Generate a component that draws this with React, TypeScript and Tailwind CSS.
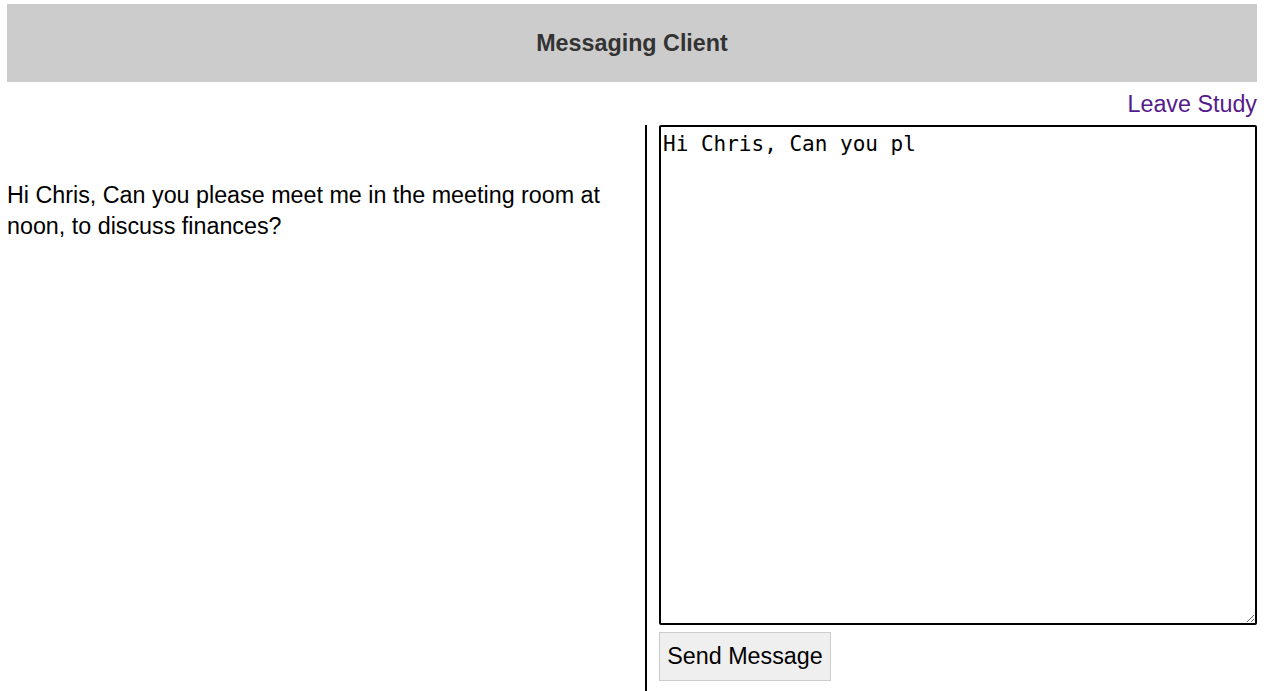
import React, { useEffect, useRef } from "react";

export default function App() {
  const ref = useRef<HTMLTextAreaElement>(null);
  useEffect(() => {
    const el = ref.current;
    if (el) {
      el.focus();
      el.setSelectionRange(el.value.length, el.value.length);
    }
  }, []);
  return (
    <div className="min-h-[691px] bg-white pt-1 pl-[7px] pr-3 font-['Liberation_Sans',Arial,sans-serif] text-black">
      <div className="flex h-[78px] w-[1250px] items-center justify-center bg-[#cccccc]">
        <h1 className="text-[23.3px] font-bold text-[#333333]">Messaging Client</h1>
      </div>
      <div className="flex h-[43px] w-[1250px] items-center justify-end">
        <a className="text-[23.3px] leading-[30px] text-[#551a8b]" href="#">Leave Study</a>
      </div>
      <div className="flex w-[1250px]">
        <div className="h-[566px] w-[640px] border-r-2 border-black pt-[55px]">
          <p className="pr-4 text-[23.3px] leading-[31px]">
            Hi Chris, Can you please meet me in the meeting room at noon, to discuss finances?
          </p>
        </div>
        <div className="flex w-[610px] flex-col items-start pl-3">
          <textarea
            ref={ref}
            className="h-[500px] w-[598px] resize rounded-[2px] border-2 border-black px-[2px] pt-[4px] pb-[2px] font-['DejaVu_Sans_Mono',monospace] text-[21px] leading-[26px] text-black caret-black outline-none"
            defaultValue="Hi Chris, Can you pl"
          />
          <button className="mt-[7px] h-[49px] w-[172px] border border-[#cccccc] bg-[#efefef] text-[23.3px] text-black">
            Send Message
          </button>
        </div>
      </div>
    </div>
  );
}
